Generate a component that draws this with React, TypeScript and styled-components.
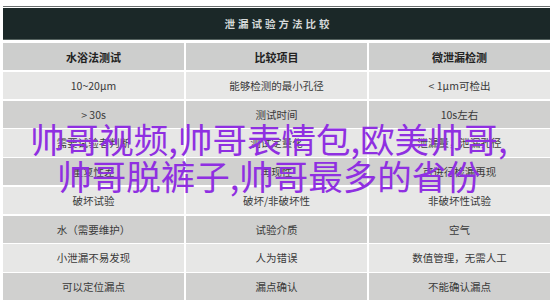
import React from "react";
import styled, { createGlobalStyle } from "styled-components";

const Global = createGlobalStyle`
  html, body { margin: 0; padding: 0; background: #ffffff; }
  body { font-family: "Noto Sans CJK SC", "Noto Sans", sans-serif; }
`;

const Page = styled.div`
  position: relative;
  width: 554px;
  height: 301px;
  overflow: hidden;
  background: #ffffff;
`;

const Wrap = styled.div`
  padding: 6px 4px 0 3px;
  display: flex;
  flex-direction: column;
`;

const TopRule = styled.div`
  height: 1px;
  background: #6a6f6f;
  margin-bottom: 1px;
`;

const TitleBar = styled.div`
  height: 31px;
  background: #1b2828;
  border-bottom: 1px solid #55625f;
  display: flex;
  align-items: center;
  justify-content: center;
  color: #d5d9d9;
  font-size: 10.5px;
  font-weight: 700;
  letter-spacing: 3px;
  padding-left: 4px;
`;

const Grid = styled.div`
  margin-top: 3px;
  display: grid;
  grid-template-columns: repeat(3, 1fr);
  grid-auto-rows: 27.25px;
  column-gap: 2px;
  row-gap: 1.5px;
`;

const Cell = styled.div<{ $tone: "head" | "light" | "dark" }>`
  display: flex;
  align-items: center;
  justify-content: center;
  background: ${(p) =>
    p.$tone === "light" ? "#e7e7e6" : p.$tone === "dark" ? "#d0d0cf" : "#cdcecd"};
  color: ${(p) => (p.$tone === "head" ? "#222222" : "#3a3a3a")};
  font-size: ${(p) => (p.$tone === "head" ? "11px" : "10.5px")};
  font-weight: ${(p) => (p.$tone === "head" ? 700 : 400)};
  white-space: nowrap;
`;

const Overlay = styled.div`
  position: absolute;
  left: 0;
  top: 120px;
  width: 538px;
  text-align: center;
  color: #8f2fe1;
  font-family: "Noto Sans CJK SC", sans-serif;
  font-size: 34.5px;
  line-height: 37px;
  font-weight: 400;
  white-space: nowrap;
`;

const Line = styled.div``;

const rows: string[][] = [
  ["水浴法测试", "比较项目", "微泄漏检测"],
  ["10~20μm", "能够检测的最小孔径", "< 1μm可检出"],
  ["> 30s", "测试时间", "10s左右"],
  ["需要试验者判断", "测试定量化", "泄漏量，泄漏孔径"],
  ["重复性差", "再现性", "可进行检漏再现"],
  ["破坏试验", "破坏/非破坏性", "非破坏性试验"],
  ["水（需要维护）", "试验介质", "空气"],
  ["小泄漏不易发现", "人为错误", "数值管理，无需人工"],
  ["可以定位漏点", "漏点确认", "不能确认漏点"],
];

export default function App() {
  return (
    <Page>
      <Global />
      <Wrap>
        <TopRule />
        <TitleBar>泄漏试验方法比较</TitleBar>
        <Grid>
          {rows.map((r, i) =>
            r.map((c, j) => (
              <Cell
                key={`${i}-${j}`}
                $tone={i === 0 ? "head" : i % 2 === 1 ? "light" : "dark"}
              >
                {c}
              </Cell>
            ))
          )}
        </Grid>
      </Wrap>
      <Overlay>
        <Line>帅哥视频,帅哥表情包,欧美帅哥,</Line>
        <Line>帅哥脱裤子,帅哥最多的省份</Line>
      </Overlay>
    </Page>
  );
}
